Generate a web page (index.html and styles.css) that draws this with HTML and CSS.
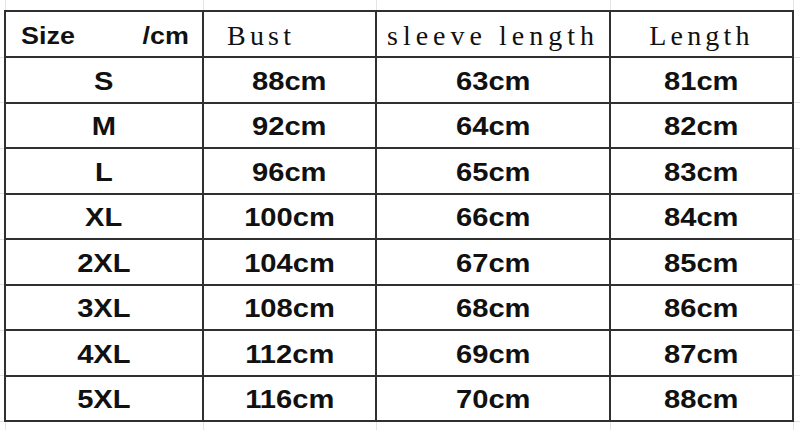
FILE: index.html
```html
<!DOCTYPE html>
<html>
<head>
<meta charset="utf-8">
<link rel="stylesheet" href="styles.css">
</head>
<body>
<table class="sheet">
  <colgroup>
    <col class="c-gut-l"><col class="c-size"><col class="c-bust"><col class="c-sleeve"><col class="c-len"><col class="c-gut-r">
  </colgroup>
  <tr class="pad">
    <td class="gut"></td><td></td><td></td><td></td><td></td><td class="gut"></td>
  </tr>
  <tr class="head">
    <td class="gut"></td>
    <th class="h-size"><div class="size-wrap"><span>Size</span><span>/cm</span></div></th>
    <th class="h-serif h-bust">Bust</th>
    <th class="h-serif h-sleeve">sleeve length</th>
    <th class="h-serif">Length</th>
    <td class="gut"></td>
  </tr>
  <tr><td class="gut"></td><td class="v"><span>S</span></td><td class="v"><span>88cm</span></td><td class="v"><span>63cm</span></td><td class="v"><span>81cm</span></td><td class="gut"></td></tr>
  <tr><td class="gut"></td><td class="v"><span>M</span></td><td class="v"><span>92cm</span></td><td class="v"><span>64cm</span></td><td class="v"><span>82cm</span></td><td class="gut"></td></tr>
  <tr><td class="gut"></td><td class="v"><span>L</span></td><td class="v"><span>96cm</span></td><td class="v"><span>65cm</span></td><td class="v"><span>83cm</span></td><td class="gut"></td></tr>
  <tr><td class="gut"></td><td class="v"><span>XL</span></td><td class="v"><span>100cm</span></td><td class="v"><span>66cm</span></td><td class="v"><span>84cm</span></td><td class="gut"></td></tr>
  <tr><td class="gut"></td><td class="v"><span>2XL</span></td><td class="v"><span>104cm</span></td><td class="v"><span>67cm</span></td><td class="v"><span>85cm</span></td><td class="gut"></td></tr>
  <tr><td class="gut"></td><td class="v"><span>3XL</span></td><td class="v"><span>108cm</span></td><td class="v"><span>68cm</span></td><td class="v"><span>86cm</span></td><td class="gut"></td></tr>
  <tr><td class="gut"></td><td class="v"><span>4XL</span></td><td class="v"><span>112cm</span></td><td class="v"><span>69cm</span></td><td class="v"><span>87cm</span></td><td class="gut"></td></tr>
  <tr><td class="gut"></td><td class="v"><span>5XL</span></td><td class="v"><span>116cm</span></td><td class="v"><span>70cm</span></td><td class="v"><span>88cm</span></td><td class="gut"></td></tr>
  <tr class="pad">
    <td class="gut"></td><td></td><td></td><td></td><td></td><td class="gut"></td>
  </tr>
</table>
</body>
</html>
```

FILE: styles.css
```css
html, body {
  margin: 0;
  padding: 0;
  background: #ffffff;
  width: 800px;
  height: 430px;
  overflow: hidden;
}

.sheet {
  border-collapse: collapse;
  table-layout: fixed;
  width: 800px;
  color: #111111;
}

.c-gut-l { width: 5px; }
.c-size { width: 198px; }
.c-bust { width: 173px; }
.c-sleeve { width: 234px; }
.c-len { width: 183px; }
.c-gut-r { width: 7px; }

.sheet td, .sheet th {
  padding: 0;
}

.pad td {
  height: 10px;
  border-left: 1px solid #e4e4e4;
  border-right: 1px solid #e4e4e4;
}

.pad td.gut {
  border: none;
}

td.gut {
  border: none;
  border-bottom: 1px solid #e2e2e2;
}

.head th, td.v {
  border: 2px solid #303030;
}

.head th {
  height: 40px;
  padding-top: 4px;
  font-weight: normal;
  text-align: center;
  vertical-align: middle;
}

.head th.h-size {
  font-family: "Liberation Sans", Arial, sans-serif;
  font-weight: bold;
  font-size: 24px;
}

.size-wrap {
  display: flex;
  justify-content: space-between;
  padding: 0 16px 0 18px;
}

.size-wrap span {
  display: inline-block;
  transform: scaleX(1.12);
}

.head th.h-serif {
  font-family: "Liberation Serif", "Times New Roman", serif;
  font-size: 28px;
  letter-spacing: 4.2px;
  line-height: 30px;
}

.head th.h-sleeve {
  letter-spacing: 5px;
}

.head th.h-bust {
  text-align: left;
  padding-left: 23px;
}

td.v {
  height: 43.5px;
  text-align: center;
  vertical-align: middle;
  font-family: "Liberation Sans", Arial, sans-serif;
  font-weight: bold;
  font-size: 26px;
  line-height: 30px;
}

td.v span {
  display: inline-block;
  transform: scaleX(1.12);
  padding-top: 2px;
}
```
